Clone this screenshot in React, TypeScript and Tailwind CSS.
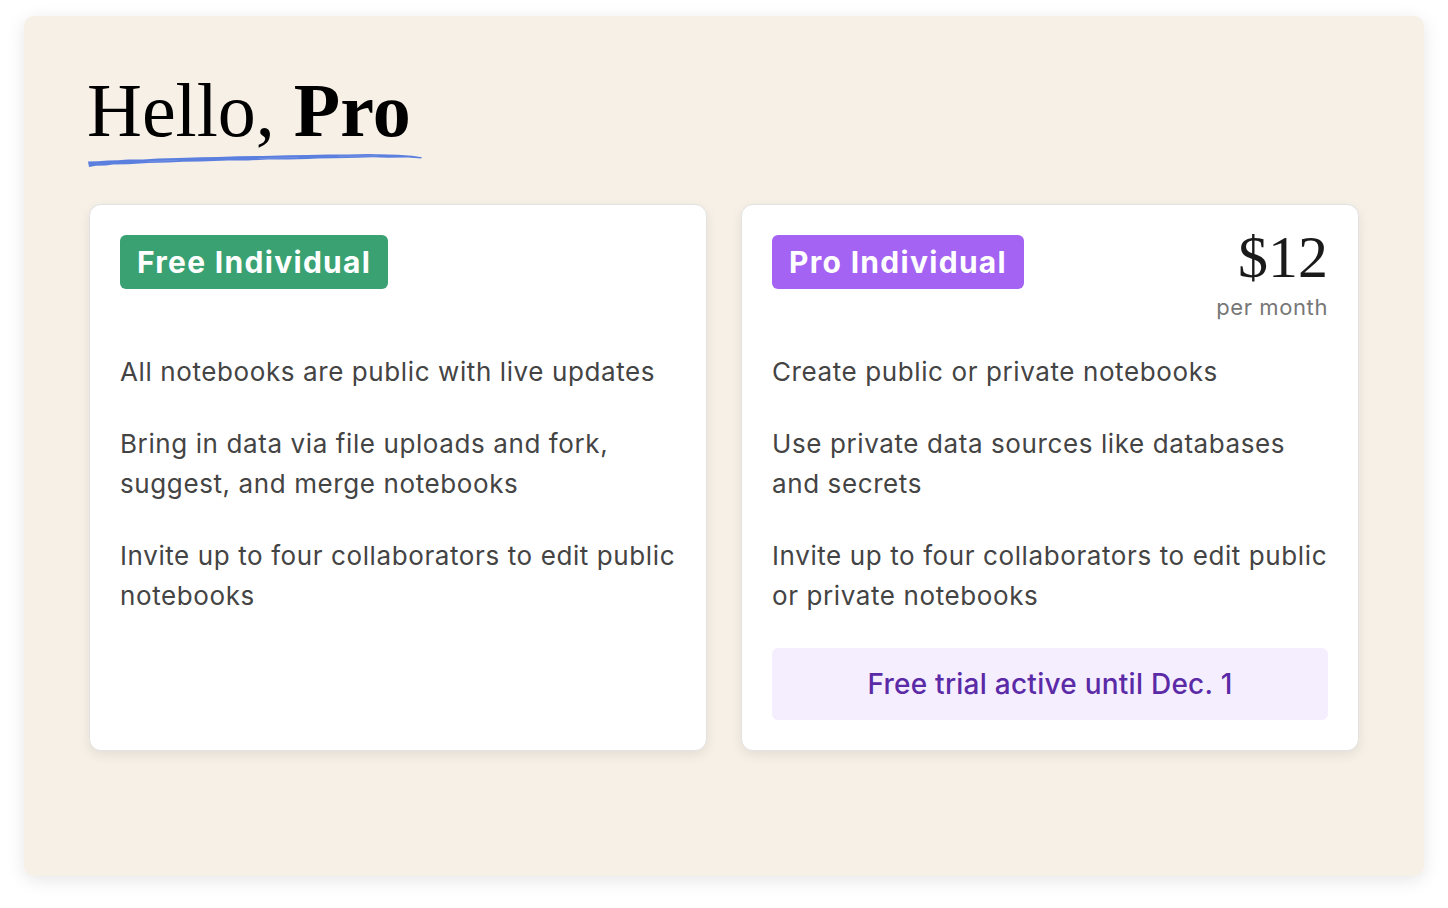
import React from "react";

const sans = { fontFamily: "Inter, 'Noto Sans', sans-serif" };
const serif = { fontFamily: "'Liberation Serif', 'DejaVu Serif', serif" };

function Squiggle() {
  return (
    <svg width="336" height="18" viewBox="0 0 336 18" className="block ml-[-1px] mt-[2px]">
      <path
        d="M0 11.5 L10 11.2 L20 10.4 L30 10.3 L40 9.6 L55 9.4 L70 8.4 L90 8.1 L113 7.2 L130 7 L150 6.2 L175 6 L200 5.2 L220 5 L240 4.4 L260 4.6 L280 4 L300 4.4 L310 4.8 L324 5.8 L334 7.2 L333 8.6 L320 7.6 L300 7.8 L285 7.2 L270 7.8 L246 8.2 L230 8.4 L220 9 L200 9.6 L180 9.6 L160 10.4 L140 10.6 L113 11.6 L95 11.8 L80 12.6 L60 13 L40 14.2 L25 14.6 L18 15.6 L8 15.8 L1 17 Z"
        fill="#5b7fdf"
      />
      <path d="M60 11.6 L90 10.2 M170 8.6 L210 7.4 M250 6.4 L290 5.8" stroke="#8aa2e8" strokeWidth="0.8" fill="none" opacity="0.6" />
    </svg>
  );
}

function Feature({ children }: { children: React.ReactNode }) {
  return <p className="text-[26px] leading-[40px] tracking-[0.6px] text-[#444444]">{children}</p>;
}

export default function App() {
  return (
    <div className="min-h-[908px] bg-white pt-[16px] px-[24px]" style={sans}>
      <div className="w-[1400px] h-[860px] rounded-[10px] bg-[#f7f0e7] shadow-[0_4px_18px_rgba(0,0,0,0.10)] pt-[56px] px-[65px]">
        <h1 className="text-[76px] leading-none text-black ml-[-2px]" style={serif}>
          Hello, <span className="font-bold">Pro</span>
        </h1>
        <Squiggle />
        <div className="grid grid-cols-2 gap-[34px] mt-[36px]">
          <div className="bg-white rounded-[12px] border border-[#e3e3e3] shadow-[0_4px_12px_rgba(0,0,0,0.08)] p-[30px]">
            <div className="h-[117px] flex items-start">
              <span className="inline-flex items-center h-[54px] px-[17px] rounded-[6px] bg-[#3aa172] text-white text-[30px] font-bold tracking-[1.3px]">
                Free Individual
              </span>
            </div>
            <div className="flex flex-col gap-[32px]">
              <Feature>All notebooks are public with live updates</Feature>
              <Feature>Bring in data via file uploads and fork, suggest, and merge notebooks</Feature>
              <Feature>Invite up to four collaborators to edit public notebooks</Feature>
            </div>
          </div>
          <div className="bg-white rounded-[12px] border border-[#e3e3e3] shadow-[0_4px_12px_rgba(0,0,0,0.08)] p-[30px]">
            <div className="h-[117px] flex items-start justify-between">
              <span className="inline-flex items-center h-[54px] px-[17px] rounded-[6px] bg-[#a463f2] text-white text-[30px] font-bold tracking-[1.3px]">
                Pro Individual
              </span>
              <div className="flex flex-col items-end">
                <div className="text-[60px] leading-none text-[#1a1a1a] mt-[-8px]" style={serif}>
                  $12
                </div>
                <div className="text-[22px] leading-[28px] tracking-[0.6px] text-[#777777] mt-[6px]">per month</div>
              </div>
            </div>
            <div className="flex flex-col gap-[32px]">
              <Feature>Create public or private notebooks</Feature>
              <Feature>Use private data sources like databases and secrets</Feature>
              <Feature>Invite up to four collaborators to edit public or private notebooks</Feature>
            </div>
            <div className="mt-[32px] h-[72px] rounded-[6px] bg-[#f5eeff] flex items-center justify-center text-[28px] font-medium tracking-[0.25px] text-[#5b2aa6]">
              Free trial active until Dec. 1
            </div>
          </div>
        </div>
      </div>
    </div>
  );
}
